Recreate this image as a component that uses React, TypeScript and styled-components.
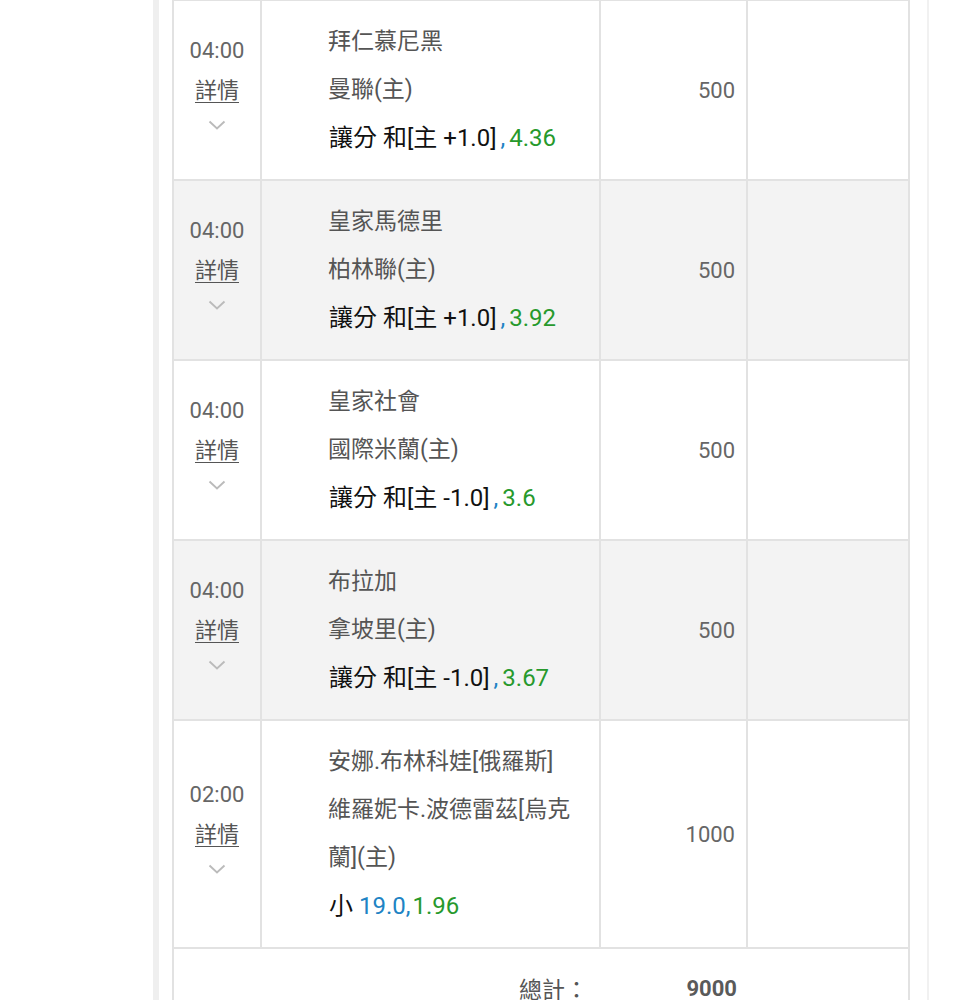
import React from "react";
import styled, { createGlobalStyle } from "styled-components";

const GlobalStyle = createGlobalStyle`
  html, body {
    margin: 0;
    padding: 0;
    background: #ffffff;
    font-family: Roboto, "Noto Sans CJK TC", "Noto Sans", sans-serif;
  }
`;

const Page = styled.div`
  width: 957px;
  height: 1000px;
  overflow: hidden;
  background: #ffffff;
`;

const Card = styled.div`
  box-sizing: border-box;
  margin-left: 153px;
  width: 776px;
  min-height: 1000px;
  border-left: 6px solid #efefef;
  border-right: 2px solid #f1f1f1;
  padding: 0 17px 0 13px;
`;

const Table = styled.div`
  box-sizing: border-box;
  width: 738px;
  border: 2px solid #e2e2e2;
  border-bottom: none;
  border-top-width: 1px;
`;

const Row = styled.div<{ $alt?: boolean }>`
  display: grid;
  grid-template-columns: 88px 339px 147px 1fr;
  background: ${(p) => (p.$alt ? "#f3f3f3" : "#ffffff")};
  border-bottom: 2px solid #e2e2e2;
`;

const Cell = styled.div`
  box-sizing: border-box;
  border-right: 2px solid #e2e2e2;
  &:last-child {
    border-right: none;
  }
`;

const TimeCell = styled(Cell)`
  display: flex;
  flex-direction: column;
  align-items: center;
  justify-content: center;
`;

const Time = styled.div`
  font-size: 22px;
  line-height: 40px;
  color: #666666;
`;

const Detail = styled.a`
  font-size: 22px;
  line-height: 40px;
  color: #555555;
  text-decoration: underline;
  text-underline-offset: 4px;
  text-decoration-thickness: 1px;
  cursor: pointer;
`;

const Chevron = styled.svg`
  display: block;
  margin: 9px 0 19px;
`;

const NameCell = styled(Cell)`
  padding: 17px 20px 17px 66px;
  display: flex;
  flex-direction: column;
  justify-content: center;
`;

const TeamLine = styled.div`
  font-size: 23px;
  line-height: 48px;
  color: #555555;
`;

const BetLine = styled.div`
  font-size: 24px;
  line-height: 48px;
  color: #111111;
  padding-left: 1px;
`;

const Blue = styled.span`
  color: #2083c4;
`;

const Comma = styled.span<{ $spaced?: boolean }>`
  margin-left: ${(p) => (p.$spaced ? "4px" : "0")};
  margin-right: ${(p) => (p.$spaced ? "4px" : "2px")};
`;

const Green = styled.span`
  color: #27992c;
`;

const AmountCell = styled(Cell)`
  display: flex;
  align-items: center;
  justify-content: flex-end;
  padding-right: 11px;
  font-size: 22px;
  color: #666666;
`;

const TotalRow = styled.div`
  display: grid;
  grid-template-columns: 88px 339px 147px 1fr;
  height: 78px;
  align-items: center;
  font-size: 22px;
  color: #555555;
`;

const TotalLabel = styled.div`
  grid-column: 1 / 3;
  text-align: right;
  padding-right: 13px;
  font-size: 23px;
`;

const TotalValue = styled.div`
  text-align: right;
  padding-right: 11px;
  font-weight: 700;
  color: #5a5a5a;
`;

type Bet = {
  time: string;
  lines: string[];
  bet: string;
  line?: string;
  odds: string;
  amount: string;
};

const bets: Bet[] = [
  { time: "04:00", lines: ["拜仁慕尼黑", "曼聯(主)"], bet: "讓分 和[主 +1.0]", odds: "4.36", amount: "500" },
  { time: "04:00", lines: ["皇家馬德里", "柏林聯(主)"], bet: "讓分 和[主 +1.0]", odds: "3.92", amount: "500" },
  { time: "04:00", lines: ["皇家社會", "國際米蘭(主)"], bet: "讓分 和[主 -1.0]", odds: "3.6", amount: "500" },
  { time: "04:00", lines: ["布拉加", "拿坡里(主)"], bet: "讓分 和[主 -1.0]", odds: "3.67", amount: "500" },
  {
    time: "02:00",
    lines: ["安娜.布林科娃[俄羅斯]", "維羅妮卡.波德雷茲[烏克蘭](主)"],
    bet: "小",
    line: "19.0",
    odds: "1.96",
    amount: "1000",
  },
];

const ChevronIcon = () => (
  <Chevron width="18" height="10" viewBox="0 0 18 10">
    <path d="M1.5 1.5 L9 8.5 L16.5 1.5" fill="none" stroke="#bbbbbb" strokeWidth="1.9" />
  </Chevron>
);

export default function App() {
  return (
    <Page>
      <GlobalStyle />
      <Card>
        <Table>
          {bets.map((b, i) => (
            <Row key={i} $alt={i % 2 === 1}>
              <TimeCell>
                <Time>{b.time}</Time>
                <Detail>詳情</Detail>
                <ChevronIcon />
              </TimeCell>
              <NameCell>
                {b.lines.map((l) => (
                  <TeamLine key={l}>{l}</TeamLine>
                ))}
                <BetLine>
                  {b.bet}
                  {b.line ? " " : ""}
                  <Blue>
                    {b.line ?? ""}
                    <Comma $spaced={!b.line}>,</Comma>
                  </Blue>
                  <Green>{b.odds}</Green>
                </BetLine>
              </NameCell>
              <AmountCell>{b.amount}</AmountCell>
              <Cell />
            </Row>
          ))}
          <TotalRow>
            <TotalLabel>總計：</TotalLabel>
            <TotalValue>9000</TotalValue>
          </TotalRow>
        </Table>
      </Card>
    </Page>
  );
}
